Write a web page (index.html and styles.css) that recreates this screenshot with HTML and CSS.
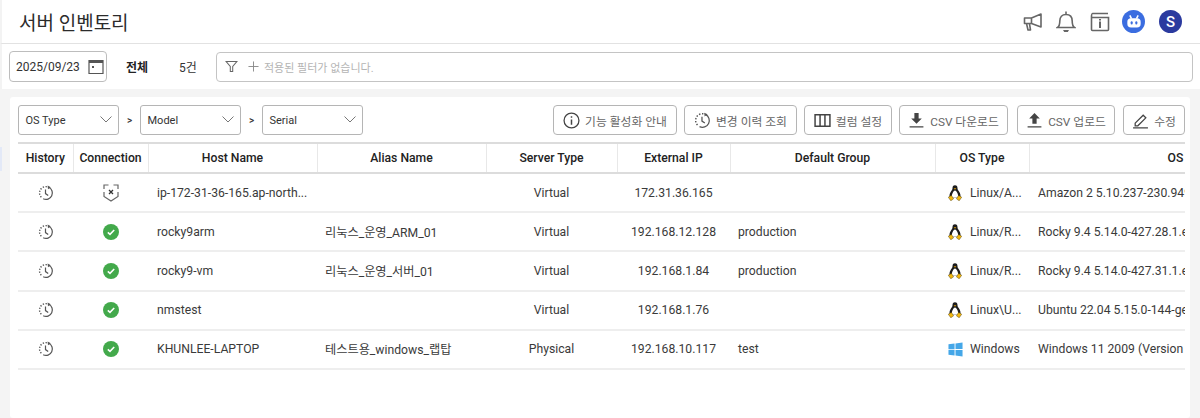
FILE: index.html
```html
<!DOCTYPE html>
<html lang="ko">
<head>
<meta charset="utf-8">
<title>서버 인벤토리</title>
<link rel="stylesheet" href="styles.css">
</head>
<body>
<svg class="defs" width="0" height="0" aria-hidden="true">
  <symbol id="hist" viewBox="0 0 16 16">
    <path d="M10.800 2.300A6.300 6.300 0 0 1 5.200 13.800" fill="none" stroke="#555" stroke-width="1.200"/>
    <path d="M8.800 1.700A6.300 6.300 0 0 0 4.400 13.200" fill="none" stroke="#555" stroke-width="1.400" stroke-dasharray="1.300 1.500"/>
    <path d="M7.500 4.400V8.600L10.200 10.400" fill="none" stroke="#555" stroke-width="1.200"/>
    <path d="M9.600.6 12.800 2.200 10 4.200Z" fill="#555"/>
  </symbol>
  <symbol id="ok" viewBox="0 0 16 16">
    <circle cx="8" cy="8" r="8" fill="#43a94b"/>
    <path d="M4.800 8.300 7 10.300 11.200 6" fill="none" stroke="#fff" stroke-width="1.600"/>
  </symbol>
  <symbol id="tux" viewBox="0 0 14 16">
    <path d="M7 .3C5.200.3 4.500 1.600 4.500 3.200 4.500 4.500 3.700 5.300 2.800 6.700 1.800 8.300 1.200 10 1.600 12.500H12.400C12.800 10 12.200 8.300 11.200 6.700 10.300 5.300 9.500 4.500 9.500 3.200 9.500 1.600 8.800.3 7 .3Z" fill="#1c1c1c"/>
    <path d="M7 5.400C6.100 5.400 5.600 6.200 4.900 7.500 4.200 8.700 3.700 10.200 4 12.500H10C10.300 10.200 9.800 8.700 9.100 7.500 8.400 6.200 7.900 5.400 7 5.400Z" fill="#fff"/>
    <path d="M5.700 3.300 7 4.800 8.300 3.300Z" fill="#e8a80e"/>
    <path d="M.3 12.200 3.400 10.400 5.600 13.800 2.800 15.800ZM13.700 12.200 10.600 10.400 8.400 13.800 11.200 15.800Z" fill="#f2b70f" stroke="#5c4a12" stroke-width=".5"/>
  </symbol>
  <symbol id="win" viewBox="0 0 16 16">
    <path d="M.5 2.500 7 1.600v6H.5Zm7.500-1L15.500.5v7H8ZM.5 8.400H7v6l-6.500-.9Zm7.500 0h7.500v7L8 14.500Z" fill="#45a7e8"/>
  </symbol>
  <symbol id="shield" viewBox="0 0 16 18">
    <path d="M1 5V1h4.500M10.500 1H15V5M15 8V12.500L8 17 1 12.500V8" fill="none" stroke="#666" stroke-width="1.200"/>
    <path d="M6 6 10 10M10 6 6 10" stroke="#333" stroke-width="1.300"/>
  </symbol>
  <symbol id="chev" viewBox="0 0 12 7">
    <path d="M.5 .5 6 6 11.500 .5" fill="none" stroke="#777" stroke-width="1"/>
  </symbol>
</svg>

<header class="topbar">
  <h1 class="title">서버 인벤토리</h1>
  <div class="top-icons">
    <svg class="ti ti-horn" viewBox="0 0 20 20"><path d="M1.500 6H8.500L18 2V15L8.500 11.500H1.500ZM8.500 6V11.500M3.500 11.500 5 18H7.500L6.500 11.800" fill="none" stroke="#666" stroke-width="1.600" stroke-linejoin="round"/></svg>
    <svg class="ti ti-bell" viewBox="0 0 20 22"><path d="M1.500 16.500C3.800 15 3.800 12.500 3.800 10 3.800 6 6 3.500 10 3.500S16.200 6 16.200 10C16.200 12.500 16.200 15 18.500 16.500ZM10 .5V3.500" fill="none" stroke="#666" stroke-width="1.600"/><path d="M7 19h6l-1.200 2H8.200Z" fill="#666"/></svg>
    <svg class="ti ti-book" viewBox="0 0 20 20"><path d="M1.500 4.500V17.500c0 .6.400 1 1 1H17.500c.6 0 1-.4 1-1V5.500H2.500c-.6 0-1-.4-1-1S1.900 1.500 2.500 1.500H18" fill="none" stroke="#666" stroke-width="1.600"/><path d="M9 9.500h2v6.500H9ZM9 7h2v1.500H9Z" fill="#666"/></svg>
    <span class="bot">
      <svg viewBox="0 0 24 24"><path d="M7 4 9 8M17 4 15 8" stroke="#fff" stroke-width="1.800"/><rect x="4" y="7.500" width="16" height="11" rx="4.500" fill="#fff"/><rect x="8" y="11" width="2.400" height="4" rx="1.200" fill="#3b6de0"/><rect x="13.600" y="11" width="2.400" height="4" rx="1.200" fill="#3b6de0"/></svg>
    </span>
    <span class="avatar">S</span>
  </div>
</header>

<section class="filterbar">
  <div class="datebox">
    <span>2025/09/23</span>
    <svg class="cal" viewBox="0 0 16 16"><path d="M1 1.500h14v13H1Z" fill="none" stroke="#555" stroke-width="1.200"/><path d="M1 3h14" stroke="#555" stroke-width="2"/><rect x="4" y="7" width="2" height="2" fill="#555"/></svg>
  </div>
  <strong class="all">전체</strong>
  <span class="count">5건</span>
  <div class="filterbox">
    <svg class="funnel" viewBox="0 0 14 14"><path d="M1 1.500H13L8.300 7V12.500H5.700V7Z" fill="none" stroke="#666" stroke-width="1.100"/></svg>
    <svg class="plus" viewBox="0 0 12 12"><path d="M6 .5v11M.5 6h11" stroke="#888" stroke-width="1"/></svg>
    <span class="placeholder">적용된 필터가 없습니다.</span>
  </div>
</section>

<main class="stage">
  <aside class="edge"></aside>
  <section class="card">
    <div class="controls">
      <div class="sel"><span>OS Type</span><svg class="chev"><use href="#chev"/></svg></div>
      <span class="gt">&gt;</span>
      <div class="sel"><span>Model</span><svg class="chev"><use href="#chev"/></svg></div>
      <span class="gt">&gt;</span>
      <div class="sel"><span>Serial</span><svg class="chev"><use href="#chev"/></svg></div>
      <div class="actions">
        <button class="btn btn-1"><svg class="bi" viewBox="0 0 16 16"><circle cx="8" cy="8" r="7" fill="none" stroke="#444" stroke-width="1.200"/><path d="M7.300 7h1.400v5H7.300ZM7.300 4h1.400v1.500H7.300Z" fill="#444"/></svg>기능 활성화 안내</button>
        <button class="btn btn-2"><svg class="bi"><use href="#hist"/></svg>변경 이력 조회</button>
        <button class="btn btn-3"><svg class="bi" viewBox="0 0 16 16"><path d="M1 2.500h14v11H1ZM5.700 2.500v11M10.300 2.500v11" fill="none" stroke="#444" stroke-width="1.400"/></svg>컬럼 설정</button>
        <button class="btn btn-4"><svg class="bi" viewBox="0 0 16 16"><path d="M6 1h4v5h3L8 11 3 6h3Z" fill="#444"/><path d="M1.500 14h13" stroke="#444" stroke-width="1.400"/></svg>CSV 다운로드</button>
        <button class="btn btn-5"><svg class="bi" viewBox="0 0 16 16"><path d="M6 11h4V6h3L8 1 3 6h3Z" fill="#444"/><path d="M1.500 14h13" stroke="#444" stroke-width="1.400"/></svg>CSV 업로드</button>
        <button class="btn btn-6"><svg class="bi" viewBox="0 0 16 16"><path d="M3 10.500 10.500 3l2.500 2.500L5.500 13H3ZM1 15h14" fill="none" stroke="#444" stroke-width="1.200"/></svg>수정</button>
      </div>
    </div>

    <div class="table-wrap">
      <table class="grid">
        <colgroup>
          <col class="c1"><col class="c2"><col class="c3"><col class="c4"><col class="c5"><col class="c6"><col class="c7"><col class="c8"><col class="c9">
        </colgroup>
        <thead>
          <tr><th>History</th><th>Connection</th><th>Host Name</th><th>Alias Name</th><th>Server Type</th><th>External IP</th><th>Default Group</th><th>OS Type</th><th class="os-head">OS</th></tr>
        </thead>
        <tbody>
          <tr>
            <td class="mid"><svg class="ri"><use href="#hist"/></svg></td>
            <td class="mid"><svg class="ri ri-shield"><use href="#shield"/></svg></td>
            <td class="pad-wide">ip-172-31-36-165.ap-north...</td>
            <td class="pad"></td>
            <td class="mid">Virtual</td>
            <td class="mid">172.31.36.165</td>
            <td class="pad"></td>
            <td class="ost"><span class="oswrap"><svg class="oi"><use href="#tux"/></svg>Linux/A...</span></td>
            <td class="pad-wide">Amazon 2 5.10.237-230.949.amzn2</td>
          </tr>
          <tr>
            <td class="mid"><svg class="ri"><use href="#hist"/></svg></td>
            <td class="mid"><svg class="ri"><use href="#ok"/></svg></td>
            <td class="pad-wide">rocky9arm</td>
            <td class="pad">리눅스_운영_ARM_01</td>
            <td class="mid">Virtual</td>
            <td class="mid">192.168.12.128</td>
            <td class="pad">production</td>
            <td class="ost"><span class="oswrap"><svg class="oi"><use href="#tux"/></svg>Linux/R...</span></td>
            <td class="pad-wide">Rocky 9.4 5.14.0-427.28.1.el9</td>
          </tr>
          <tr>
            <td class="mid"><svg class="ri"><use href="#hist"/></svg></td>
            <td class="mid"><svg class="ri"><use href="#ok"/></svg></td>
            <td class="pad-wide">rocky9-vm</td>
            <td class="pad">리눅스_운영_서버_01</td>
            <td class="mid">Virtual</td>
            <td class="mid">192.168.1.84</td>
            <td class="pad">production</td>
            <td class="ost"><span class="oswrap"><svg class="oi"><use href="#tux"/></svg>Linux/R...</span></td>
            <td class="pad-wide">Rocky 9.4 5.14.0-427.31.1.el9</td>
          </tr>
          <tr>
            <td class="mid"><svg class="ri"><use href="#hist"/></svg></td>
            <td class="mid"><svg class="ri"><use href="#ok"/></svg></td>
            <td class="pad-wide">nmstest</td>
            <td class="pad"></td>
            <td class="mid">Virtual</td>
            <td class="mid">192.168.1.76</td>
            <td class="pad"></td>
            <td class="ost"><span class="oswrap"><svg class="oi"><use href="#tux"/></svg>Linux\U...</span></td>
            <td class="pad-wide">Ubuntu 22.04 5.15.0-144-generic</td>
          </tr>
          <tr>
            <td class="mid"><svg class="ri"><use href="#hist"/></svg></td>
            <td class="mid"><svg class="ri"><use href="#ok"/></svg></td>
            <td class="pad-wide">KHUNLEE-LAPTOP</td>
            <td class="pad">테스트용_windows_랩탑</td>
            <td class="mid">Physical</td>
            <td class="mid">192.168.10.117</td>
            <td class="pad">test</td>
            <td class="ost"><span class="oswrap"><svg class="oi oi-win"><use href="#win"/></svg>Windows</span></td>
            <td class="pad-wide">Windows 11 2009 (Version 10.0)</td>
          </tr>
        </tbody>
      </table>
    </div>
  </section>
</main>
</body>
</html>
```

FILE: styles.css
```css
* { box-sizing: border-box; }
html, body { margin: 0; padding: 0; height: 418px; overflow: hidden; background: #fff; }
body {
  font-family: Roboto, "Noto Sans CJK KR", sans-serif;
  font-size: 12.2px;
  color: #333;
}
.defs { position: absolute; }

.topbar {
  height: 44px;
  display: flex;
  align-items: center;
  justify-content: space-between;
  padding: 0 18px 0 17px;
  border-left: 2px solid #f3f3f3;
  border-bottom: 1px solid #e2e2e2;
}
.title { margin: 0; font-size: 19px; font-weight: 400; color: #2b2b2b; }
.top-icons { display: flex; align-items: center; }
.ti { width: 20px; height: 20px; flex: none; }
.ti-horn { margin-right: 13px; }
.ti-bell { height: 22px; margin-right: 14px; }
.ti-book { margin-right: 12px; }
.bot {
  width: 23px; height: 23px; border-radius: 50%;
  background: #3b6de0;
  display: flex; align-items: center; justify-content: center;
  margin-right: 14px;
}
.bot svg { width: 20px; height: 20px; }
.avatar {
  width: 23px; height: 23px; border-radius: 50%;
  background: #2b3a9f; color: #fff;
  font-size: 15px; font-weight: 500;
  display: flex; align-items: center; justify-content: center;
}

.filterbar {
  height: 45px;
  display: flex;
  align-items: center;
  padding: 0 7px 0 7px;
  border-left: 2px solid #f3f3f3;
}
.datebox {
  width: 98px; height: 31px;
  border: 1px solid #bdbdbd; border-radius: 4px;
  display: flex; align-items: center; justify-content: space-between;
  padding: 0 1px 0 6px;
  font-size: 12px;
  color: #333;
}
.cal { width: 16px; height: 16px; margin-right: 1px; }
.all { margin-left: 19px; width: 53px; font-size: 12px; font-weight: 700; color: #222; }
.count { width: 37px; font-size: 12px; }
.filterbox {
  flex: 1; height: 30px;
  border: 1px solid #c4c4c4; border-radius: 4px;
  display: flex; align-items: center;
  padding-left: 8px;
}
.funnel { width: 13px; height: 13px; }
.plus { width: 11px; height: 11px; margin-left: 10px; }
.placeholder { margin-left: 5px; font-size: 11px; color: #b4b4b4; }

.stage {
  height: 329px;
  background: #f4f4f4;
  padding: 8px 10px 0;
  position: relative;
}
.edge {
  position: absolute; left: 0; top: 58px;
  width: 2px; height: 24px;
  background: #e3e9f7;
}
.card {
  background: #fff;
  border-radius: 3px;
  height: 321px;
  padding: 8px 5px 0 8px;
  overflow: hidden;
}

.controls { display: flex; align-items: center; height: 30px; }
.sel {
  width: 101px; height: 30px;
  border: 1px solid #b5b5b5; border-radius: 3px;
  display: flex; align-items: center; justify-content: space-between;
  padding: 0 6px 0 6.500px;
  font-size: 11px;
}
.chev { width: 12px; height: 7px; margin-top: -2px; }
.gt { width: 21px; text-align: center; font-size: 10px; font-weight: 500; }
.actions { margin-left: auto; display: flex; }
.btn {
  height: 30px;
  margin-left: 7px;
  border: 1px solid #b5b5b5; border-radius: 4px;
  background: #fff;
  display: flex; align-items: center; justify-content: center;
  font-family: inherit;
  font-size: 11.8px;
  color: #666;
  padding: 0;
  white-space: nowrap;
}
.bi { width: 17px; height: 17px; margin-right: 5px; flex: none; }
.btn-1 { width: 124px; }
.btn-2 { width: 113px; }
.btn-3 { width: 88px; }
.btn-4 { width: 109px; }
.btn-5 { width: 98px; margin-left: 9px; }
.btn-6 { width: 62px; margin-left: 8px; }

.table-wrap { margin-top: 7px; overflow: hidden; }
.grid {
  table-layout: fixed;
  border-collapse: collapse;
  width: 1212px;
}
.c1 { width: 55px; } .c2 { width: 75px; } .c3 { width: 169px; } .c4 { width: 169px; }
.c5 { width: 131px; } .c6 { width: 113px; } .c7 { width: 205px; } .c8 { width: 94px; } .c9 { width: 201px; }

.grid th {
  height: 30px;
  font-size: 12.2px;
  font-weight: 500;
  color: #222;
  text-align: center;
  padding: 0;
  border-top: 2px solid #dcdcdc;
  border-bottom: 2px solid #dcdcdc;
  border-right: 1px solid #e8e8e8;
}
.grid th.os-head { text-align: left; padding-left: 138px; border-right: 0; }
.grid td {
  height: 39.2px;
  padding: 0;
  border-bottom: 2px solid #eeeeee;
  white-space: nowrap;
  overflow: hidden;
  color: #3a3a3a;
}
.mid { text-align: center; }
.grid td.pad { padding-left: 8px; }
.grid td.pad-wide { padding-left: 9px; }
.ri { width: 16px; height: 16px; vertical-align: middle; }
.ri-shield { width: 16px; height: 18px; }
.grid td.ost { text-align: left; padding-left: 13px; }
.oswrap { display: flex; align-items: center; }
.oi { width: 14px; height: 16px; margin-right: 8px; flex: none; }
.oi-win { width: 15px; height: 15px; margin-right: 7px; }
```
